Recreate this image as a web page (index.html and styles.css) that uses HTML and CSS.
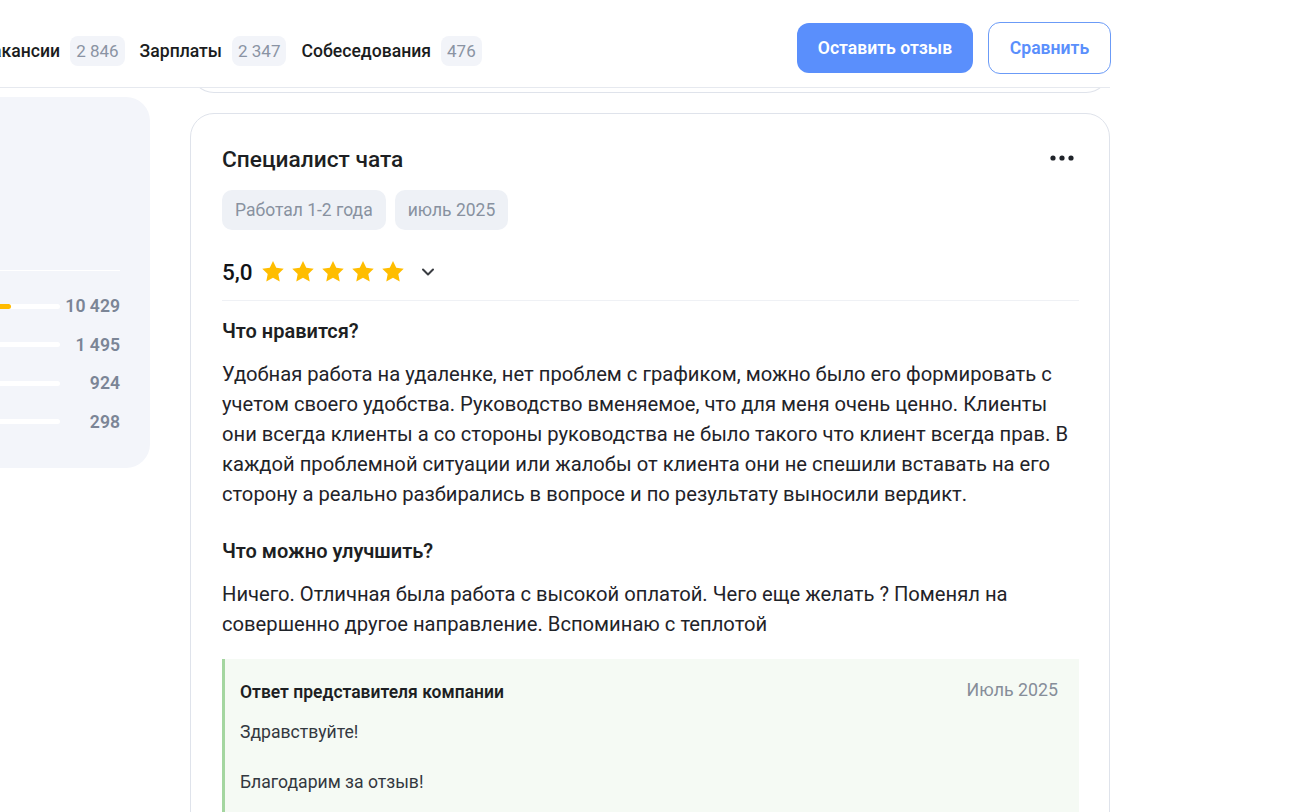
FILE: index.html
```html
<!DOCTYPE html>
<html lang="ru">
<head>
<meta charset="utf-8">
<title>Отзывы</title>
<link rel="stylesheet" href="styles.css">
</head>
<body>
<div class="page">
  <header class="topbar">
    <nav class="tabs">
      <a class="tab"><span class="tab-name">Вакансии</span><span class="tab-count">2 846</span></a>
      <a class="tab"><span class="tab-name">Зарплаты</span><span class="tab-count">2 347</span></a>
      <a class="tab"><span class="tab-name">Собеседования</span><span class="tab-count">476</span></a>
    </nav>
    <div class="actions">
      <button class="btn btn-primary">Оставить отзыв</button>
      <button class="btn btn-outline">Сравнить</button>
    </div>
  </header>

  <div class="layout">
    <aside class="side">
      <div class="panel">
        <div class="summary">
          <div class="summary-value">4,6</div>
        </div>
        <div class="panel-divider"></div>
        <div class="dist">
          <div class="dist-row"><span class="dist-label">5</span><span class="track"><span class="fill" style="width: 68%"></span></span><span class="dist-count">10 429</span></div>
          <div class="dist-row"><span class="dist-label">4</span><span class="track"><span class="fill" style="width: 0%"></span></span><span class="dist-count">1 495</span></div>
          <div class="dist-row"><span class="dist-label">3</span><span class="track"><span class="fill" style="width: 0%"></span></span><span class="dist-count">924</span></div>
          <div class="dist-row"><span class="dist-label">2</span><span class="track"><span class="fill" style="width: 0%"></span></span><span class="dist-count">298</span></div>
        </div>
      </div>
    </aside>

    <main class="feed">
      <div class="card-tail"></div>
      <article class="review">
        <div class="review-head">
          <h2 class="review-title">Специалист чата</h2>
          <button class="more" aria-label="Ещё">
            <svg width="24" height="6" viewBox="0 0 24 6"><circle cx="3" cy="3" r="2.6" fill="#1f2329"/><circle cx="12" cy="3" r="2.6" fill="#1f2329"/><circle cx="21" cy="3" r="2.6" fill="#1f2329"/></svg>
          </button>
        </div>
        <div class="tags">
          <span class="tag">Работал 1-2 года</span>
          <span class="tag">июль 2025</span>
        </div>
        <div class="rating">
          <span class="rating-value">5,0</span>
          <span class="stars">
            <svg class="star" viewBox="0 0 24 24"><path d="M12 1.8l3 6.3 6.9.9-5 4.8 1.3 6.9L12 17.4l-6.2 3.3 1.3-6.9-5-4.8 6.9-.9z"/></svg>
            <svg class="star" viewBox="0 0 24 24"><path d="M12 1.8l3 6.3 6.9.9-5 4.8 1.3 6.9L12 17.4l-6.2 3.3 1.3-6.9-5-4.8 6.9-.9z"/></svg>
            <svg class="star" viewBox="0 0 24 24"><path d="M12 1.8l3 6.3 6.9.9-5 4.8 1.3 6.9L12 17.4l-6.2 3.3 1.3-6.9-5-4.8 6.9-.9z"/></svg>
            <svg class="star" viewBox="0 0 24 24"><path d="M12 1.8l3 6.3 6.9.9-5 4.8 1.3 6.9L12 17.4l-6.2 3.3 1.3-6.9-5-4.8 6.9-.9z"/></svg>
            <svg class="star" viewBox="0 0 24 24"><path d="M12 1.8l3 6.3 6.9.9-5 4.8 1.3 6.9L12 17.4l-6.2 3.3 1.3-6.9-5-4.8 6.9-.9z"/></svg>
          </span>
          <svg class="chevron" viewBox="0 0 20 20"><polyline points="5,7.5 10,12.5 15,7.5" fill="none" stroke="#3a3d42" stroke-width="2" stroke-linecap="round" stroke-linejoin="round"/></svg>
        </div>
        <div class="divider"></div>

        <h3 class="section-title">Что нравится?</h3>
        <p class="section-text">Удобная работа на удаленке, нет проблем с графиком, можно было его формировать с учетом своего удобства. Руководство вменяемое, что для меня очень ценно. Клиенты они всегда клиенты а со стороны руководства не было такого что клиент всегда прав. В каждой проблемной ситуации или жалобы от клиента они не спешили вставать на его сторону а реально разбирались в вопросе и по результату выносили вердикт.</p>

        <h3 class="section-title section-gap">Что можно улучшить?</h3>
        <p class="section-text">Ничего. Отличная была работа с высокой оплатой. Чего еще желать ? Поменял на совершенно другое направление. Вспоминаю с теплотой</p>

        <div class="answer">
          <div class="answer-head">
            <span class="answer-title">Ответ представителя компании</span>
            <span class="answer-date">Июль 2025</span>
          </div>
          <p class="answer-text">Здравствуйте!</p>
          <p class="answer-text answer-gap">Благодарим за отзыв!</p>
        </div>
      </article>
    </main>
  </div>
</div>
</body>
</html>
```
FILE: styles.css
```css
* { box-sizing: border-box; }

html, body {
  margin: 0;
  padding: 0;
  background: #ffffff;
  overflow: hidden;
}

body {
  font-family: Roboto, "Noto Sans", "Liberation Sans", sans-serif;
  color: #1f2329;
}

.page {
  width: 1272px;
  margin-left: -162px;
}

/* Header */
.topbar {
  position: relative;
  z-index: 2;
  background: #ffffff;
  height: 88px;
  border-bottom: 1px solid #e6e9ef;
  display: flex;
  align-items: center;
  justify-content: space-between;
  padding-top: 9px;
}

.tabs {
  display: flex;
  align-items: center;
  gap: 15px;
  padding-left: 143px;
  margin-top: 6px;
}

.tab {
  display: flex;
  align-items: center;
  gap: 10px;
  text-decoration: none;
  color: #1a1c20;
}

.tab-name {
  font-size: 17.6px;
  font-weight: 500;
}

.tab-count {
  background: #f2f4f9;
  color: #8a93a3;
  font-size: 17px;
  height: 30px;
  line-height: 30px;
  padding: 0 6px;
  border-radius: 8px;
}

.actions {
  display: flex;
  align-items: center;
  gap: 15px;
  margin-right: -1px;
}

.btn {
  font-family: Roboto, "Noto Sans", "Liberation Sans", sans-serif;
  font-size: 17.6px;
  font-weight: 600;
  border-radius: 12px;
  cursor: pointer;
}

.btn-primary {
  background: #5a8ffc;
  color: #ffffff;
  border: none;
  height: 50px;
  width: 176px;
}

.btn-outline {
  background: #ffffff;
  color: #5a8ffc;
  border: 1px solid #6b9bf7;
  height: 52px;
  width: 123px;
}

/* Layout */
.layout {
  display: flex;
  gap: 40px;
  align-items: flex-start;
}

.side {
  width: 312px;
  flex: none;
  padding-top: 9px;
}

.panel {
  background: #f3f5fa;
  border-radius: 24px;
  padding: 30px 30px 34px 30px;
}

.summary {
  height: 143px;
}

.summary-value {
  font-size: 40px;
  font-weight: 700;
  width: 80px;
}

.panel-divider {
  height: 1px;
  background: #ffffff;
}

.dist {
  display: flex;
  flex-direction: column;
  gap: 14.6px;
  margin-top: 23px;
}

.dist-row {
  display: grid;
  grid-template-columns: 40px 1fr 60px;
  align-items: center;
  height: 24px;
}

.dist-label {
  font-size: 17px;
  color: #7b8596;
  font-weight: 600;
}

.track {
  display: block;
  height: 5px;
  background: #ffffff;
  border-radius: 3px;
  overflow: hidden;
}

.fill {
  display: block;
  height: 100%;
  background: #ffbb00;
  border-radius: 3px;
}

.dist-count {
  text-align: right;
  font-size: 17.6px;
  font-weight: 600;
  color: #7b8596;
}

/* Feed */
.feed {
  width: 920px;
  flex: none;
}

.card-tail {
  height: 30px;
  margin-top: -25px;
  border: 1px solid #dfe3eb;
  border-top: none;
  border-radius: 0 0 24px 24px;
}

.review {
  margin-top: 20px;
  border: 1px solid #dfe3eb;
  border-radius: 24px;
  padding: 32px 30px 40px 31px;
}

.review-head {
  display: flex;
  justify-content: space-between;
  align-items: flex-start;
}

.review-title {
  margin: 0;
  font-size: 22.7px;
  line-height: 28px;
  font-weight: 500;
  color: #1d1f23;
}

.more {
  border: none;
  background: none;
  padding: 0;
  margin: 6px 5px 0 0;
  width: 24px;
  height: 12px;
  display: flex;
  align-items: center;
  justify-content: center;
}

.tags {
  display: flex;
  gap: 9px;
  margin-top: 16px;
}

.tag {
  height: 40px;
  line-height: 40px;
  padding: 0 13px;
  background: #eef1f6;
  border-radius: 10px;
  color: #8891a0;
  font-size: 17.5px;
}

.rating {
  display: flex;
  align-items: center;
  height: 28px;
  margin-top: 28px;
}

.rating-value {
  font-size: 22.5px;
  font-weight: 500;
  color: #111317;
  margin-right: 7px;
}

.stars {
  display: flex;
  gap: 4px;
}

.star {
  width: 26px;
  height: 26px;
  fill: #ffbd00;
}

.chevron {
  width: 20px;
  height: 20px;
  margin-left: 12px;
}

.divider {
  height: 1px;
  background: #eff1f5;
  margin-top: 14px;
}

.section-title {
  margin: 18px 0 0 0;
  font-size: 20px;
  line-height: 24px;
  font-weight: 600;
  color: #1d1f23;
}

.section-gap {
  margin-top: 30px;
}

.section-text {
  margin: 16px 0 0 0;
  font-size: 20.2px;
  line-height: 30px;
  color: #1f2329;
}

.answer {
  margin-top: 20px;
  background: #f5faf4;
  border-left: 3px solid #a4d6a0;
  padding: 21px 21px 30px 15px;
}

.answer-head {
  display: flex;
  justify-content: space-between;
  align-items: center;
}

.answer-title {
  font-size: 17.5px;
  line-height: 24px;
  font-weight: 600;
  color: #1d1f23;
}

.answer-date {
  font-size: 17.8px;
  color: #868d99;
  line-height: 24px;
  margin-top: -4px;
}

.answer-text {
  margin: 16px 0 0 0;
  font-size: 17.6px;
  line-height: 25px;
  color: #333840;
}

.answer-gap {
  margin-top: 25px;
}
```
